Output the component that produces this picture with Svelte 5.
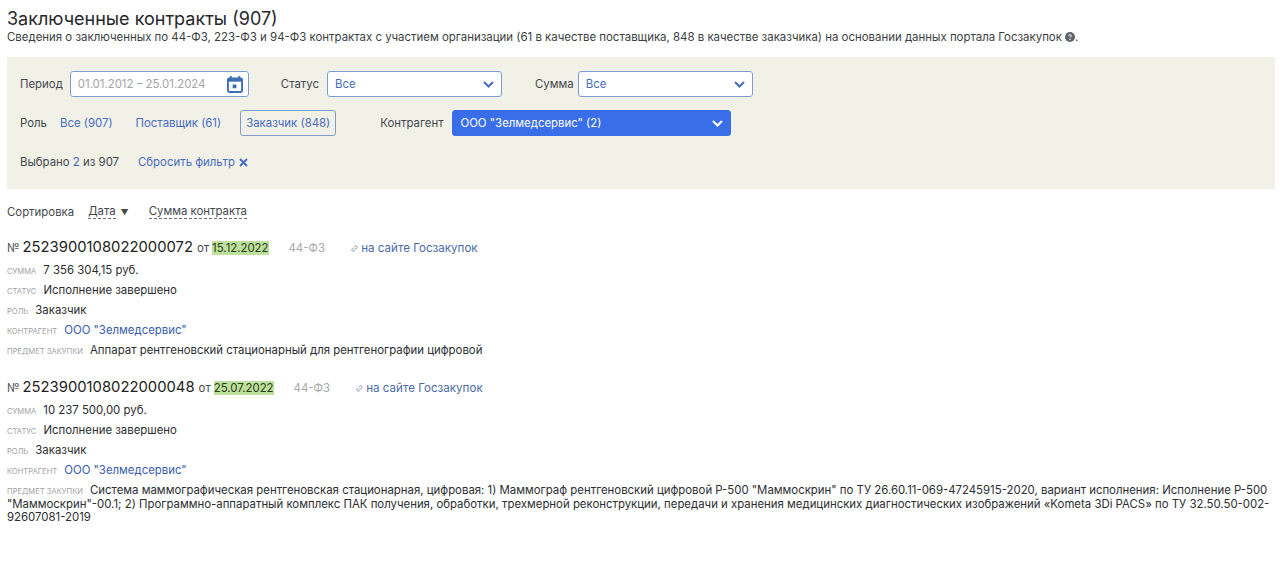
<script>
	const contracts = [
		{
			number: '2523900108022000072',
			date: '15.12.2022',
			sum: '7 356 304,15 руб.',
			subject: 'Аппарат рентгеновский стационарный для рентгенографии цифровой'
		},
		{
			number: '2523900108022000048',
			date: '25.07.2022',
			sum: '10 237 500,00 руб.',
			subject:
				'Система маммографическая рентгеновская стационарная, цифровая: 1) Маммограф рентгеновский цифровой Р-500 "Маммоскрин" по ТУ 26.60.11-069-47245915-2020, вариант исполнения: Исполнение Р-500 "Маммоскрин"-00.1; 2) Программно-аппаратный комплекс ПАК получения, обработки, трехмерной реконструкции, передачи и хранения медицинских диагностических изображений «Kometa 3Di PACS» по ТУ 32.50.50-002-92607081-2019'
		}
	];
</script>

{#snippet chevron()}
	<svg class="chevron" width="11" height="7" viewBox="0 0 11 7" aria-hidden="true">
		<path d="M1 1l4.5 4.5L10 1" fill="none" stroke="currentColor" stroke-width="2" />
	</svg>
{/snippet}

<main class="page">
	<h1 class="title">Заключенные контракты (907)</h1>
	<p class="lead">
		Сведения о заключенных по 44-ФЗ, 223-ФЗ и 94-ФЗ контрактах с участием организации (61 в качестве поставщика, 848 в качестве заказчика) на основании данных портала Госзакупок
		<svg class="help" width="10" height="10" viewBox="0 0 10 10" aria-hidden="true">
			<circle cx="5" cy="5" r="5" fill="#5f6468" />
			<path d="M3.7 3.9C3.8 3 4.3 2.6 5 2.6s1.3.5 1.3 1.1c0 .9-1.2 1-1.2 2" fill="none" stroke="#fff" stroke-width="1" />
			<circle cx="5" cy="7.4" r=".7" fill="#fff" />
		</svg>.
	</p>

	<section class="filters">
		<div class="row">
			<span class="label">Период</span>
			<div class="field period">
				<span class="placeholder">01.01.2012 – 25.01.2024</span>
				<svg width="16" height="17" viewBox="0 0 17 18" aria-hidden="true">
					<path d="M4 0v3M13 0v3" stroke="#3a6fb5" stroke-width="2" />
					<rect x="1" y="2.5" width="15" height="14.5" rx="1.5" fill="none" stroke="#3a6fb5" stroke-width="2" />
					<rect x="1" y="2.5" width="15" height="3.5" fill="#3a6fb5" />
					<rect x="6" y="9" width="4" height="4" fill="#3a6fb5" />
				</svg>
			</div>
			<span class="label status-label">Статус</span>
			<div class="field select status"><span>Все</span>{@render chevron()}</div>
			<span class="label sum-label">Сумма</span>
			<div class="field select sum"><span>Все</span>{@render chevron()}</div>
		</div>

		<div class="row">
			<span class="label">Роль</span>
			<a class="role all" href="#all">Все (907)</a>
			<a class="role supplier" href="#supplier">Поставщик (61)</a>
			<a class="role active" href="#customer">Заказчик (848)</a>
			<span class="label party-label">Контрагент</span>
			<div class="field select party"><span>ООО "Зелмедсервис" (2)</span>{@render chevron()}</div>
		</div>

		<div class="row selected">
			<span class="label">Выбрано <b>2</b> из 907</span>
			<a class="reset" href="#reset">
				Сбросить фильтр
				<svg width="9" height="9" viewBox="0 0 9 9" aria-hidden="true">
					<path d="M1 1l7 7M8 1 1 8" stroke="currentColor" stroke-width="2" />
				</svg>
			</a>
		</div>
	</section>

	<div class="sort">
		<span>Сортировка</span>
		<span class="sort-option">Дата</span>
		<span class="arrow">▼</span>
		<span class="sort-option second">Сумма контракта</span>
	</div>

	{#each contracts as contract (contract.number)}
		<article class="contract">
			<div class="head">
				<span class="no">№</span>
				<span class="number">{contract.number}</span>
				<span class="from">от</span>
				<mark>{contract.date}</mark>
				<span class="law">44-ФЗ</span>
				<a class="source" href="#source">
					<svg width="7" height="7" viewBox="0 0 7 7" aria-hidden="true">
						<path d="M3 4.5 4.5 3M2.8 2.2l1-1a1.3 1.3 0 0 1 2 2l-1 1M4.2 4.8l-1 1a1.3 1.3 0 0 1-2-2l1-1" fill="none" stroke="#7c8796" stroke-width=".8" />
					</svg>
					на сайте Госзакупок
				</a>
			</div>
			<div class="line"><small>СУММА</small>{contract.sum}</div>
			<div class="line"><small>СТАТУС</small>Исполнение завершено</div>
			<div class="line"><small>РОЛЬ</small>Заказчик</div>
			<div class="line"><small>КОНТРАГЕНТ</small><a href="#party">ООО "Зелмедсервис"</a></div>
			<div class="line subject"><small>ПРЕДМЕТ ЗАКУПКИ</small>{contract.subject}</div>
		</article>
	{/each}
</main>

<style>
	:global(body) {
		margin: 0;
		background: #fff;
	}

	.page {
		padding: 7px 5px 0 7px;
		font-family: Inter, 'Noto Sans', sans-serif;
		font-size: 11.4px;
		color: #26282b;
	}

	.title {
		margin: 0;
		font-size: 18px;
		font-weight: 400;
		line-height: 23px;
	}

	.lead {
		margin: 0;
		height: 27px;
		font-size: 11.43px;
		line-height: 15px;
		color: #3b3e42;
		white-space: nowrap;
	}

	.help {
		vertical-align: -1px;
	}

	.filters {
		height: 132px;
		box-sizing: border-box;
		padding: 14px 13px 0;
		background: #f1f1e8;
		color: #45484c;
	}

	.row {
		display: flex;
		align-items: center;
		height: 26px;
		margin-bottom: 13px;
	}

	.label b {
		font-weight: 400;
		color: #3a62b8;
	}

	.field {
		display: flex;
		align-items: center;
		justify-content: space-between;
		box-sizing: border-box;
		height: 26px;
		padding: 0 7px;
		background: #fff;
		border: 1px solid #7f9bd0;
		border-radius: 3px;
		color: #4a6cc0;
	}

	.period {
		width: 179px;
		margin-left: 7px;
		padding-right: 5px;
	}

	.placeholder {
		color: #a3a5a8;
	}

	.status-label {
		margin-left: 32px;
	}

	.status {
		width: 175px;
		margin-left: 8px;
	}

	.sum-label {
		margin-left: 33px;
	}

	.sum {
		width: 175px;
		margin-left: 4px;
	}

	.chevron {
		color: #4a6cc0;
	}

	.role {
		color: #4a6cc0;
		text-decoration: none;
		line-height: 24px;
	}

	.all {
		margin-left: 13px;
	}

	.supplier {
		margin-left: 23px;
	}

	.active {
		margin-left: 19px;
		padding: 0 5px;
		border: 1px solid #7f9bd0;
		border-radius: 3px;
	}

	.party-label {
		margin-left: 44px;
	}

	.party {
		width: 279px;
		margin-left: 9px;
		background: #3a6ee8;
		border-color: #3a6ee8;
		color: #fff;
	}

	.party .chevron {
		color: #fff;
	}

	.reset {
		display: inline-flex;
		align-items: center;
		gap: 4px;
		margin-left: 19px;
		color: #4a6cc0;
		text-decoration: none;
	}

	.sort {
		display: flex;
		align-items: center;
		height: 16px;
		margin-top: 15px;
		margin-bottom: 18px;
		color: #45484c;
	}

	.sort-option {
		margin-left: 14px;
		border-bottom: 1px dashed #6a6d70;
		line-height: 13px;
	}

	.second {
		margin-left: 20px;
	}

	.arrow {
		margin-left: 5px;
		font-size: 8px;
	}

	.contract {
		margin-bottom: 20.5px;
	}

	.head {
		display: flex;
		align-items: baseline;
		height: 20px;
		margin-bottom: 2px;
	}

	.no {
		color: #55585c;
		font-size: 11.5px;
		margin-right: 3px;
	}

	.number {
		font-size: 14.8px;
		color: #222;
	}

	.from {
		margin: 0 3px 0 4px;
		color: #45484c;
	}

	mark {
		background: #bde09a;
		color: #2c3a22;
		line-height: 14px;
	}

	.law {
		margin-left: 20px;
		color: #a6a8aa;
	}

	.source {
		margin-left: 26px;
		font-size: 11.6px;
		color: #4c6aa8;
		text-decoration: none;
	}

	.line {
		height: 20px;
		line-height: 20px;
		color: #2c2e31;
	}

	.line small {
		margin-right: 7px;
		font-size: 7.6px;
		line-height: 1;
		color: #a0a2a5;
	}

	.line a {
		color: #3a5cab;
		text-decoration: none;
	}

	.subject {
		height: auto;
		line-height: 13.5px;
		padding-top: 4px;
	}
</style>
